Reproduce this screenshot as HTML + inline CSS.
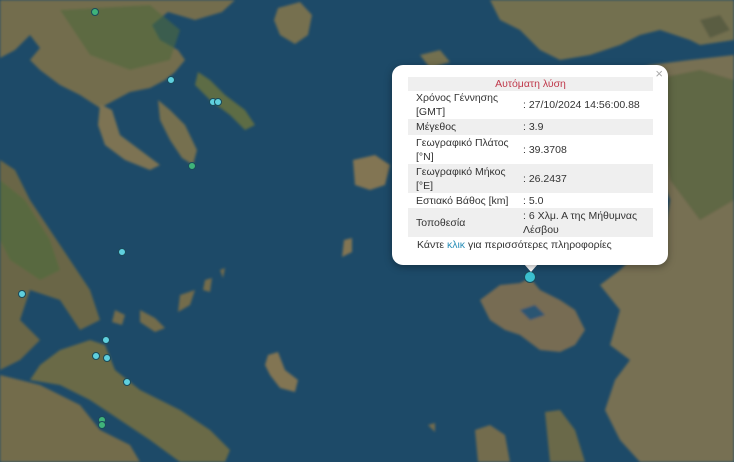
<!DOCTYPE html>
<html><head><meta charset="utf-8"><style>
html,body{margin:0;padding:0;width:734px;height:462px;overflow:hidden;background:#1d4a68}
#map{position:absolute;left:0;top:0}
.pop{position:absolute;left:392px;top:65px;width:276px;height:200px;background:#fff;border-radius:11px;box-shadow:0 2px 8px rgba(0,0,0,.35);font-family:"Liberation Sans","DejaVu Sans",sans-serif;font-size:10.5px;color:#333}
.tip{position:absolute;left:531px;top:264px;width:0;height:0;border-left:7px solid transparent;border-right:7px solid transparent;border-top:8px solid #fff;margin-left:-7px}
.x{position:absolute;right:5px;top:1px;color:#aaa;font-size:13px}
table{position:absolute;left:16px;top:12px;width:245px;border-collapse:collapse}
td{padding:0 0 0 8px;line-height:14px;vertical-align:middle}
td.v{padding-left:1px}
tr.g{background:#efefef}
.t{text-align:center;color:#c0394b}
.lk{position:absolute;left:25px;top:174px}
.lk span{color:#2a8fb8}
</style></head><body>
<svg id="map" width="734" height="462" viewBox="0 0 734 462">
<defs><filter id="b"><feGaussianBlur stdDeviation="1.2"/></filter></defs>
<rect width="734" height="462" fill="#1d4a68"/>
<g filter="url(#b)">
<path d="M0,0 L235,0 L222,12 L195,20 L168,12 L152,25 L160,40 L178,50 L185,60 L175,72 L165,80 L150,88 L130,92 L115,100 L100,108 L80,95 L60,85 L40,70 L30,60 L40,48 L30,35 L15,50 L0,58 Z" fill="#736d4d"/>
<path d="M60,10 L150,5 L180,30 L170,60 L130,70 L90,55 Z" fill="#4e6a3c" opacity=".6"/>
<path d="M100,104 L112,110 L120,135 L140,150 L160,165 L150,170 L125,160 L105,145 L98,125 Z" fill="#7d7352"/>
<path d="M158,100 L170,110 L185,125 L197,150 L193,165 L182,158 L170,140 L160,120 Z" fill="#76704f"/>
<path d="M198,72 L210,80 L225,95 L245,110 L255,125 L245,130 L230,115 L210,100 L195,85 Z" fill="#5d6c44"/>
<path d="M278,8 L300,2 L312,15 L308,35 L295,44 L280,35 L274,20 Z" fill="#766f50"/>
<path d="M0,160 L15,170 L30,200 L50,230 L70,260 L90,290 L100,320 L80,330 L60,300 L30,290 L20,320 L40,340 L20,360 L0,370 Z" fill="#6a6646"/>
<path d="M0,180 L25,200 L50,240 L60,270 L40,280 L10,260 L0,240 Z" fill="#4f6a3a" opacity=".6"/>
<path d="M60,350 L90,340 L105,345 L115,370 L140,390 L180,410 L210,430 L230,450 L225,462 L180,462 L150,440 L120,420 L90,400 L60,385 L30,380 L40,365 Z" fill="#6a6a46"/>
<path d="M0,375 L40,385 L80,405 L100,430 L130,445 L140,462 L0,462 Z" fill="#736c4c"/>
<path d="M115,310 L125,315 L122,325 L112,322 Z" fill="#736c4c"/>
<path d="M140,310 L155,318 L165,328 L155,332 L140,322 Z" fill="#736c4c"/>
<path d="M180,295 L195,290 L190,305 L178,312 Z" fill="#736c4c"/>
<path d="M205,280 L212,278 L210,292 L203,290 Z" fill="#736c4c"/>
<path d="M220,270 L225,268 L223,278 Z" fill="#736c4c"/>
<path d="M268,355 L278,352 L285,370 L298,380 L295,392 L280,388 L270,375 L265,365 Z" fill="#827452"/>
<path d="M353,160 L375,155 L390,165 L385,185 L370,190 L355,185 Z" fill="#827452"/>
<path d="M344,240 L352,238 L352,252 L342,257 Z" fill="#827452"/>
<path d="M490,0 L734,0 L734,40 L700,45 L690,40 L660,30 L640,35 L620,45 L590,55 L560,60 L540,50 L520,30 L500,20 Z" fill="#736f50"/>
<path d="M420,55 L440,50 L450,62 L430,68 Z" fill="#736f50"/>
<path d="M700,20 L720,15 L730,30 L710,38 Z" fill="#5a5d42"/>
<path d="M620,75 L650,65 L690,60 L734,55 L734,462 L640,462 L620,440 L605,410 L615,380 L630,360 L610,345 L620,310 L600,285 L620,270 L640,250 L660,260 L670,200 L650,150 L640,110 Z" fill="#776f52"/>
<path d="M650,80 L700,70 L734,80 L734,200 L700,220 L670,180 L660,120 Z" fill="#52633d" opacity=".6"/>
<path d="M480,300 L500,285 L520,283 L530,278 L540,290 L560,300 L575,310 L585,330 L575,345 L560,352 L540,350 L520,335 L505,330 L490,320 Z" fill="#776c52"/>
<path d="M520,310 L535,305 L545,315 L530,320 Z" fill="#2a5572"/>
<path d="M475,430 L490,425 L505,435 L510,462 L478,462 Z" fill="#736c4e"/>
<path d="M545,412 L560,410 L575,430 L585,462 L550,462 Z" fill="#6a6948"/>
<path d="M428,425 L435,423 L435,432 Z" fill="#736c4e"/>
</g>
<g stroke="#1a4a5a" stroke-width="1">
<circle cx="95" cy="12" r="3.5" fill="#3fb37a"/>
<circle cx="171" cy="80" r="3.5" fill="#5fd0de"/>
<circle cx="213" cy="102" r="3.5" fill="#5fd0de"/>
<circle cx="218" cy="102" r="3.5" fill="#5fd0de"/>
<circle cx="192" cy="166" r="3.5" fill="#3fb37a"/>
<circle cx="122" cy="252" r="3.5" fill="#5fd0de"/>
<circle cx="22" cy="294" r="3.5" fill="#5fd0de"/>
<circle cx="106" cy="340" r="3.5" fill="#5fd0de"/>
<circle cx="96" cy="356" r="3.5" fill="#5fd0de"/>
<circle cx="107" cy="358" r="3.5" fill="#5fd0de"/>
<circle cx="127" cy="382" r="3.5" fill="#5fd0de"/>
<circle cx="102" cy="420" r="3.5" fill="#3fb37a"/>
<circle cx="102" cy="425" r="3.5" fill="#3fb37a"/>
<circle cx="530" cy="277" r="5.5" fill="#3bbfcf"/>
</g>
</svg>
<div class="tip"></div>
<div class="pop">
<div class="x">×</div>
<table>
<tr class="g"><td colspan="2" class="t" style="height:14px;padding:0">Αυτόματη λύση</td></tr>
<tr style="height:28px"><td style="width:106px">Χρόνος Γέννησης<br>[GMT]</td><td class="v">: 27/10/2024 14:56:00.88</td></tr>
<tr class="g" style="height:16px"><td>Μέγεθος</td><td class="v">: 3.9</td></tr>
<tr style="height:29px"><td>Γεωγραφικό Πλάτος<br>[°N]</td><td class="v">: 39.3708</td></tr>
<tr class="g" style="height:29px"><td>Γεωγραφικό Μήκος<br>[°E]</td><td class="v">: 26.2437</td></tr>
<tr style="height:15px"><td>Εστιακό Βάθος [km]</td><td class="v">: 5.0</td></tr>
<tr class="g" style="height:29px"><td>Τοποθεσία</td><td class="v">: 6 Χλμ. Α της Μήθυμνας<br>Λέσβου</td></tr>
</table>
<div class="lk">Κάντε <span>κλικ</span> για περισσότερες πληροφορίες</div>
</div>
</body></html>
